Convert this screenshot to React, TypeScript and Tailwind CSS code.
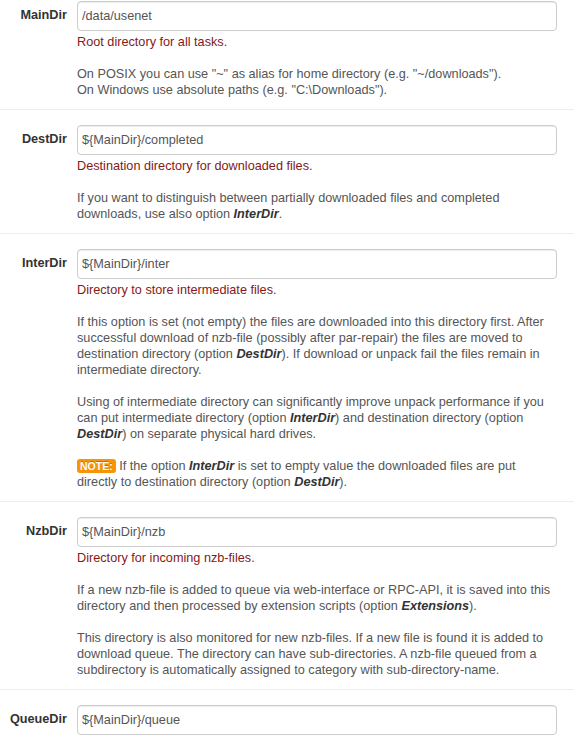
import type { ReactNode } from 'react';

interface OptionRowProps {
  name: string;
  value: string;
  summary?: string;
  first?: boolean;
  children?: ReactNode;
}

function Opt({ children }: { children: ReactNode }) {
  return <b className="italic text-[#333]">{children}</b>;
}

function OptionRow({ name, value, summary, first, children }: OptionRowProps) {
  return (
    <div className={`flex border-b border-[#eee] pb-[11px] ${first ? 'pt-px' : 'pt-[15px]'}`}>
      <div className="flex h-[30px] w-[67px] shrink-0 items-center justify-end font-bold text-[#333]">{name}</div>
      <div className="ml-[10px] w-[480px]">
        <input
          readOnly
          value={value}
          className="block h-[30px] w-full rounded-[4px] border border-[#ccc] bg-white px-[4px] text-[#555] shadow-[inset_0_1px_1px_rgba(0,0,0,0.075)] outline-none"
        />
        {summary && (
          <div className="mt-[3px] leading-[16px] text-[#555]">
            <p className="text-[#861818]">{summary}</p>
            {children}
          </div>
        )}
      </div>
    </div>
  );
}

export default function App() {
  return (
    <div className="w-[574px] bg-white font-['Liberation_Sans',Arial,sans-serif] text-[12.7px]">
      <OptionRow name="MainDir" value="/data/usenet" summary="Root directory for all tasks." first>
        <p className="mt-4">
          On POSIX you can use "~" as alias for home directory (e.g. "~/downloads").
          <br />
          On Windows use absolute paths (e.g. "C:\Downloads").
        </p>
      </OptionRow>

      <OptionRow name="DestDir" value="${MainDir}/completed" summary="Destination directory for downloaded files.">
        <p className="mt-4">
          If you want to distinguish between partially downloaded files and completed downloads, use also option{' '}
          <Opt>InterDir</Opt>.
        </p>
      </OptionRow>

      <OptionRow name="InterDir" value="${MainDir}/inter" summary="Directory to store intermediate files.">
        <p className="mt-4">
          If this option is set (not empty) the files are downloaded into this directory first. After successful
          download of nzb-file (possibly after par-repair) the files are moved to destination directory (option{' '}
          <Opt>DestDir</Opt>). If download or unpack fail the files remain in intermediate directory.
        </p>
        <p className="mt-4">
          Using of intermediate directory can significantly improve unpack performance if you can put intermediate
          directory (option <Opt>InterDir</Opt>) and destination directory (option <Opt>DestDir</Opt>) on separate
          physical hard drives.
        </p>
        <p className="mt-4">
          <span className="rounded-[3px] bg-[#f89406] px-[3px] py-px text-[10.5px] font-bold text-white [text-shadow:0_-1px_0_rgba(0,0,0,0.25)]">
            NOTE:
          </span>{' '}
          If the option <Opt>InterDir</Opt> is set to empty value the downloaded files are put directly to
          destination directory (option <Opt>DestDir</Opt>).
        </p>
      </OptionRow>

      <OptionRow name="NzbDir" value="${MainDir}/nzb" summary="Directory for incoming nzb-files.">
        <p className="mt-4">
          If a new nzb-file is added to queue via web-interface or RPC-API, it is saved into this directory and then
          processed by extension scripts (option <Opt>Extensions</Opt>).
        </p>
        <p className="mt-4">
          This directory is also monitored for new nzb-files. If a new file is found it is added to download queue.
          The directory can have sub-directories. A nzb-file queued from a subdirectory is automatically assigned to
          category with sub-directory-name.
        </p>
      </OptionRow>

      <OptionRow name="QueueDir" value="${MainDir}/queue" />
    </div>
  );
}
